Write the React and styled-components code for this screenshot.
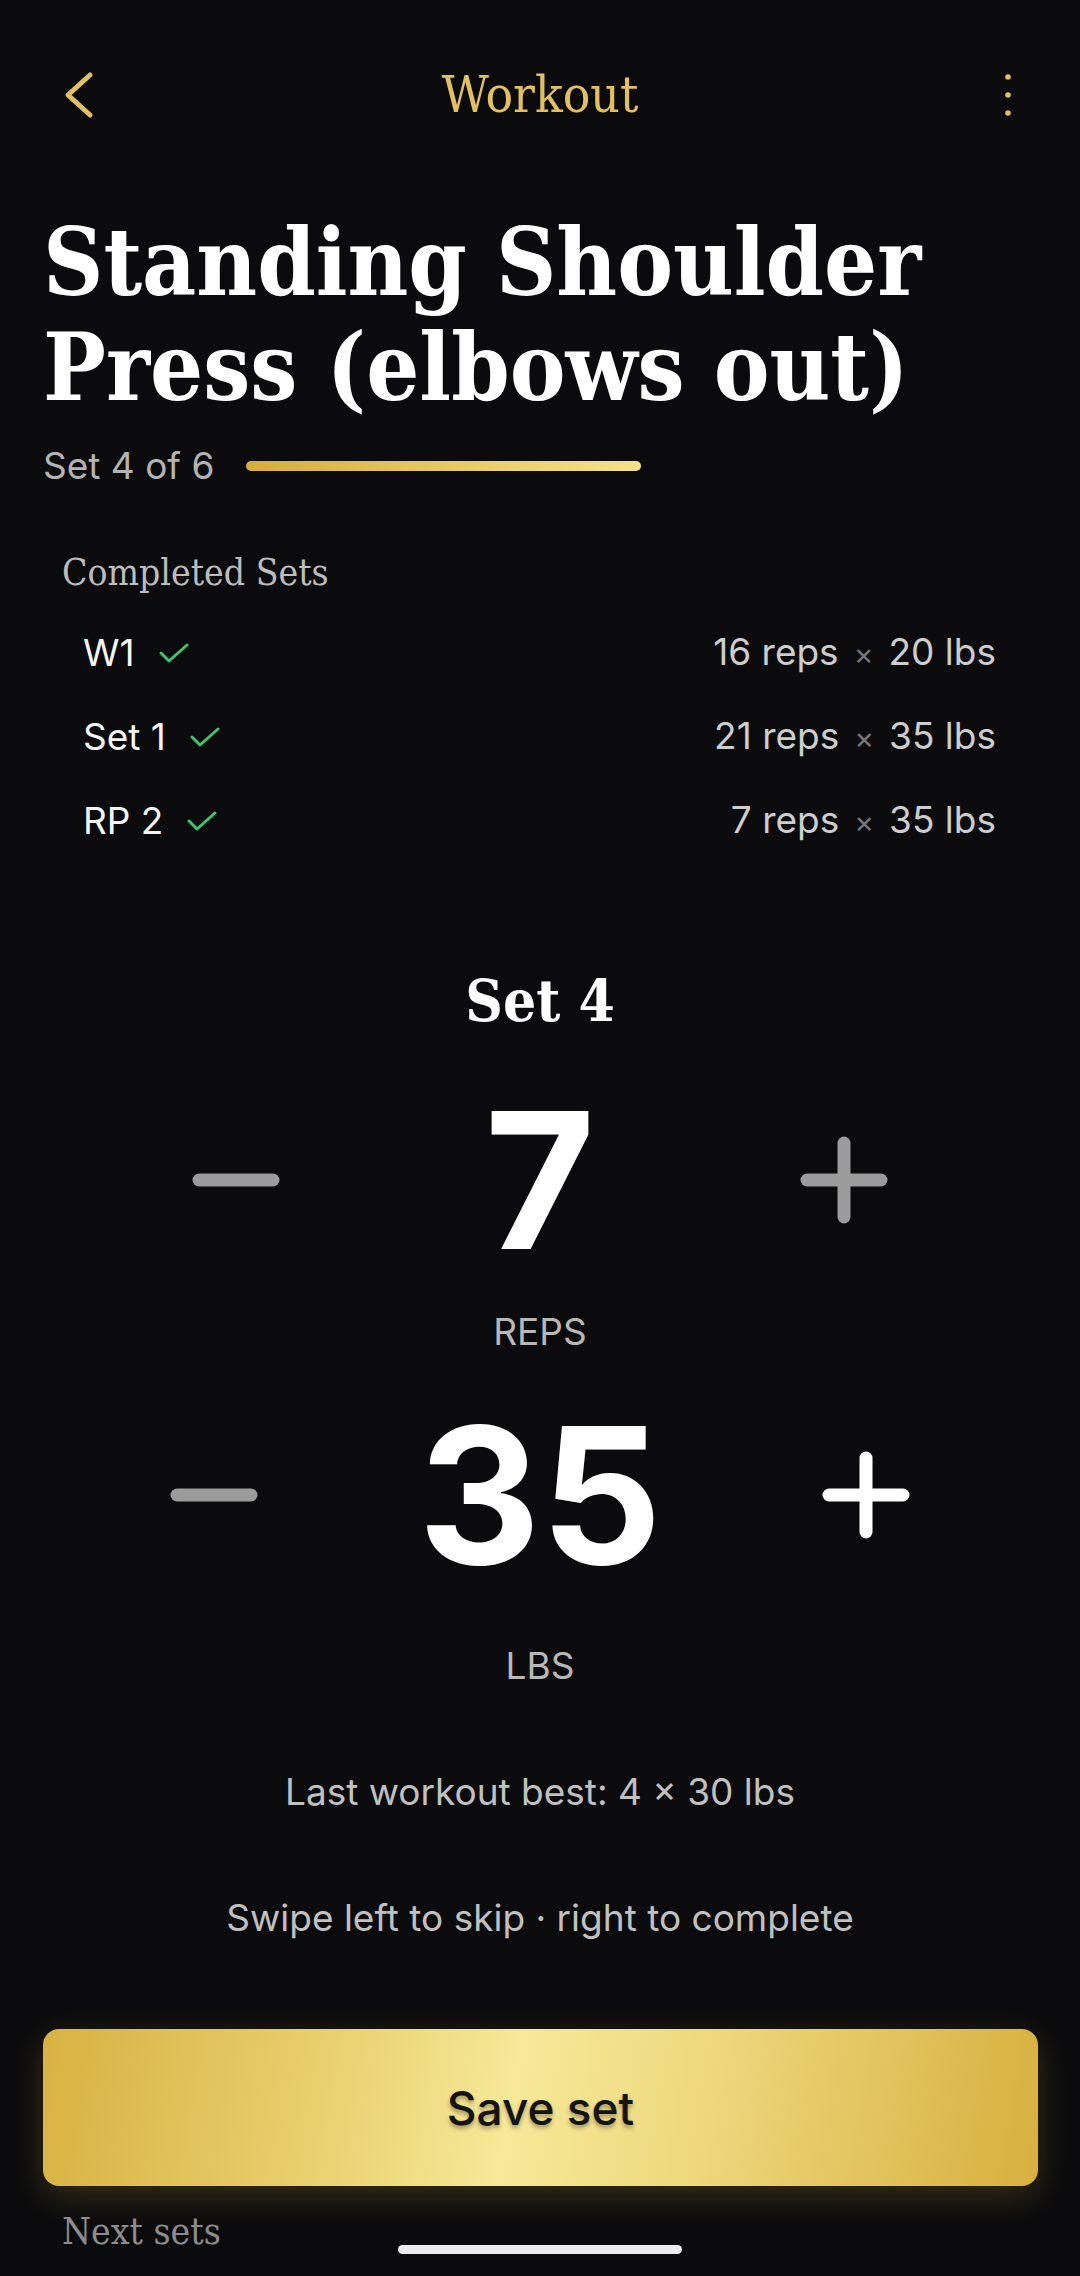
import React, { useState } from 'react';
import styled, { createGlobalStyle } from 'styled-components';

const GlobalStyle = createGlobalStyle`
  html, body {
    margin: 0;
    padding: 0;
    background: #0b0b0d;
  }
  * {
    box-sizing: border-box;
  }
`;

const SERIF = `"DejaVu Serif Condensed", "DejaVu Serif", serif`;
const SANS = `Inter, "Noto Sans", sans-serif`;

const Page = styled.div`
  position: relative;
  width: 1080px;
  min-height: 2276px;
  padding: 0 43px;
  background: #0b0b0d;
  color: #fff;
  font-family: ${SANS};
  overflow: hidden;
`;

const Header = styled.header`
  display: grid;
  grid-template-columns: 1fr auto 1fr;
  align-items: center;
  height: 50px;
  margin-top: 70px;
`;

const IconButton = styled.button`
  display: flex;
  align-items: center;
  justify-self: ${p => (p.$end ? 'end' : 'start')};
  height: 50px;
  padding: 0;
  margin: ${p => (p.$end ? '0 23px 0 0' : '0 0 0 19px')};
  border: none;
  background: transparent;
  cursor: pointer;
`;

const HeaderTitle = styled.div`
  font-family: ${SERIF};
  font-size: 51px;
  line-height: 50px;
  color: #e2c062;
`;

const Title = styled.h1`
  margin: 90px 0 0;
  font-family: ${SERIF};
  font-weight: 700;
  font-size: 93px;
  line-height: 105px;
  color: #fff;
`;

const ProgressRow = styled.div`
  display: flex;
  align-items: center;
  gap: 32px;
  margin-top: 24px;
`;

const ProgressLabel = styled.span`
  font-size: 37px;
  line-height: 44px;
  color: #b3b3b3;
`;

const ProgressBar = styled.div`
  width: 395px;
  height: 10px;
  border-radius: 5px;
  background: linear-gradient(90deg, #d4ad3f 0%, #e6c965 50%, #f4e28b 100%);
`;

const SectionLabel = styled.div`
  margin: ${p => p.$top} 0 0 19px;
  font-family: ${SERIF};
  font-size: 37px;
  line-height: 44px;
  color: ${p => p.$color};
`;

const SetList = styled.div`
  display: flex;
  flex-direction: column;
  margin-top: 16px;
  padding: 0 41px 0 40px;
`;

const SetRow = styled.div`
  display: flex;
  align-items: center;
  justify-content: space-between;
  height: 84px;
`;

const SetName = styled.div`
  display: flex;
  align-items: center;
  gap: 24px;
  font-size: 37px;
  line-height: 44px;
  color: #f5f5f5;
`;

const SetValue = styled.div`
  font-size: 37px;
  line-height: 44px;
  color: #cdcdcd;
`;

const Times = styled.span`
  margin: 0 15px;
  font-size: 30px;
  color: #767676;
`;

const CurrentSet = styled.h2`
  margin: 106px 0 0;
  text-align: center;
  font-family: ${SERIF};
  font-weight: 700;
  font-size: 58px;
  line-height: 64px;
  color: #fff;
`;

const Stepper = styled.div`
  display: flex;
  justify-content: center;
  align-items: center;
  gap: 144px;
  margin-top: ${p => p.$top};
`;

const StepButton = styled.button`
  display: flex;
  align-items: center;
  justify-content: center;
  width: 120px;
  height: 120px;
  padding: 0;
  border: none;
  background: transparent;
  color: ${p => p.$color};
  cursor: pointer;
`;

const BigNumber = styled.div`
  min-width: 200px;
  text-align: center;
  font-size: 190px;
  font-weight: 700;
  line-height: 190px;
  color: #fff;
`;

const UnitLabel = styled.div`
  margin-top: ${p => p.$top};
  text-align: center;
  font-size: 37px;
  line-height: 44px;
  color: #b8b8b8;
`;

const Hint = styled.div`
  margin-top: 82px;
  text-align: center;
  font-size: 37px;
  line-height: 44px;
  color: #c0c0c0;
`;

const SaveButton = styled.button`
  display: block;
  width: 995px;
  height: 157px;
  margin-top: 89px;
  border: none;
  border-radius: 16px;
  background: linear-gradient(100deg, #d8b243 0%, #e9cf6e 28%, #f7e998 47%, #eed77d 66%, #d7b03f 100%);
  box-shadow: 0 10px 34px rgba(214, 174, 60, 0.22);
  font-family: ${SANS};
  font-size: 46px;
  font-weight: 500;
  color: #141414;
  text-shadow: 0 3px 4px rgba(0, 0, 0, 0.35);
  cursor: pointer;
`;

const HomeIndicator = styled.div`
  position: absolute;
  left: 398px;
  bottom: 22px;
  width: 284px;
  height: 9px;
  border-radius: 5px;
  background: #ececec;
`;

const Chevron = () => (
  <svg width="34" height="50" viewBox="0 0 34 50">
    <path d="M28 5 L6 25 L28 45" fill="none" stroke="#e2c062" strokeWidth="5" strokeLinecap="round" strokeLinejoin="round" />
  </svg>
);

const Dots = () => (
  <svg width="12" height="50" viewBox="0 0 12 50">
    <circle cx="6" cy="7" r="2.8" fill="#e2c062" />
    <circle cx="6" cy="25" r="2.8" fill="#e2c062" />
    <circle cx="6" cy="43" r="2.8" fill="#e2c062" />
  </svg>
);

const Check = () => (
  <svg width="30" height="22" viewBox="0 0 30 22">
    <polyline points="2,11 10,19 28,3" fill="none" stroke="#3ec46d" strokeWidth="3" strokeLinecap="round" strokeLinejoin="round" />
  </svg>
);

const Minus = () => (
  <svg width="100" height="100" viewBox="0 0 100 100">
    <line x1="13" y1="50" x2="87" y2="50" stroke="currentColor" strokeWidth="13" strokeLinecap="round" />
  </svg>
);

const Plus = () => (
  <svg width="100" height="100" viewBox="0 0 100 100">
    <line x1="13" y1="50" x2="87" y2="50" stroke="currentColor" strokeWidth="13" strokeLinecap="round" />
    <line x1="50" y1="13" x2="50" y2="87" stroke="currentColor" strokeWidth="13" strokeLinecap="round" />
  </svg>
);

const completed = [
  { name: 'W1', reps: 16, weight: 20 },
  { name: 'Set 1', reps: 21, weight: 35 },
  { name: 'RP 2', reps: 7, weight: 35 },
];

export default function App() {
  const [reps, setReps] = useState(7);
  const [weight, setWeight] = useState(35);

  return (
    <Page>
      <GlobalStyle />
      <Header>
        <IconButton aria-label="Back"><Chevron /></IconButton>
        <HeaderTitle>Workout</HeaderTitle>
        <IconButton $end aria-label="More"><Dots /></IconButton>
      </Header>

      <Title>Standing Shoulder Press (elbows out)</Title>

      <ProgressRow>
        <ProgressLabel>Set 4 of 6</ProgressLabel>
        <ProgressBar />
      </ProgressRow>

      <SectionLabel $top="63px" $color="#bcbcbc">Completed Sets</SectionLabel>
      <SetList>
        {completed.map(s => (
          <SetRow key={s.name}>
            <SetName>
              {s.name}
              <Check />
            </SetName>
            <SetValue>
              {s.reps} reps<Times>×</Times>{s.weight} lbs
            </SetValue>
          </SetRow>
        ))}
      </SetList>

      <CurrentSet>Set 4</CurrentSet>

      <Stepper $top="52px">
        <StepButton $color="#9b9b9b" onClick={() => setReps(r => Math.max(0, r - 1))}><Minus /></StepButton>
        <BigNumber>{reps}</BigNumber>
        <StepButton $color="#9b9b9b" onClick={() => setReps(r => r + 1)}><Plus /></StepButton>
      </Stepper>
      <UnitLabel $top="35px">REPS</UnitLabel>

      <Stepper $top="46px">
        <StepButton $color="#9b9b9b" onClick={() => setWeight(w => Math.max(0, w - 5))}><Minus /></StepButton>
        <BigNumber>{weight}</BigNumber>
        <StepButton $color="#ffffff" onClick={() => setWeight(w => w + 5)}><Plus /></StepButton>
      </Stepper>
      <UnitLabel $top="54px">LBS</UnitLabel>

      <Hint>Last workout best: 4 × 30 lbs</Hint>
      <Hint>Swipe left to skip · right to complete</Hint>

      <SaveButton>Save set</SaveButton>

      <SectionLabel $top="24px" $color="#8c8c8c">Next sets</SectionLabel>

      <HomeIndicator />
    </Page>
  );
}
